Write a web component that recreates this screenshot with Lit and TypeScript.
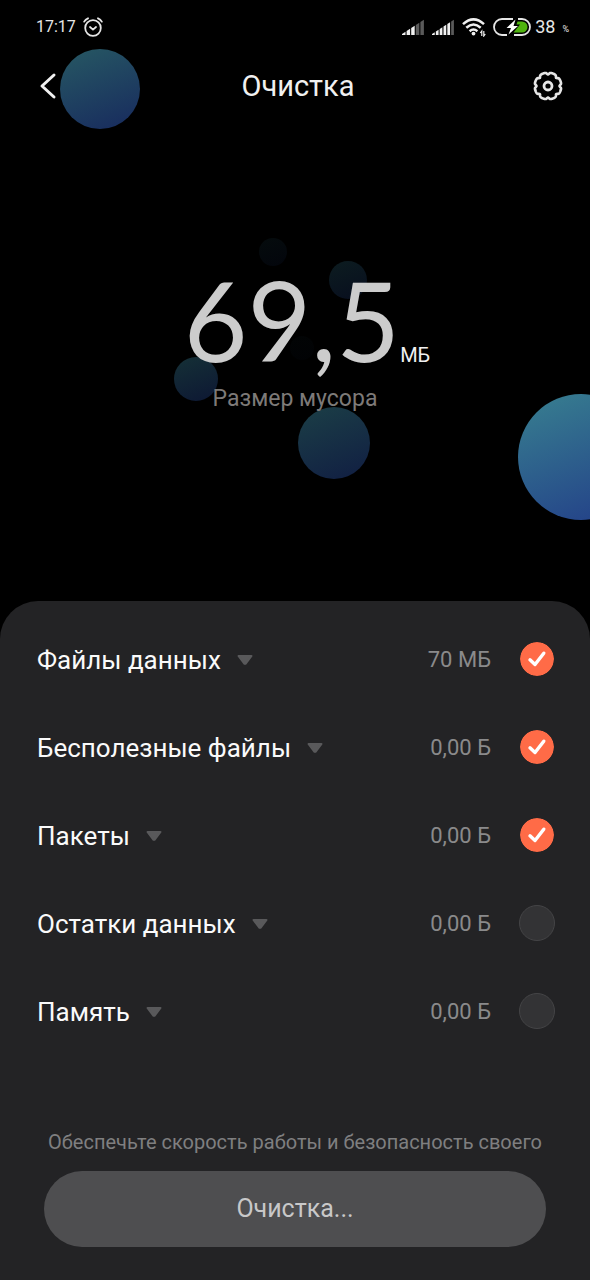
import { LitElement, html, svg, css } from "lit";
import { customElement, property, state } from "lit/decorators.js";

interface JunkItem {
  id: string;
  title: string;
  size: string;
  checked: boolean;
}

const bubbles = [
  { x: 100, y: 89, r: 40, opacity: 0.62 },
  { x: 273, y: 252, r: 14, opacity: 0.08 },
  { x: 348, y: 280, r: 19, opacity: 0.2 },
  { x: 302, y: 348, r: 12, opacity: 0.03 },
  { x: 196, y: 379, r: 22, opacity: 0.34 },
  { x: 334, y: 443, r: 36, opacity: 0.44 },
  { x: 581, y: 457, r: 63, opacity: 0.9 },
];

/* Outline of the settings gear: a circle with eight small notches. */
const gearPath = (() => {
  const points: string[] = [];
  for (let i = 0; i <= 192; i++) {
    const a = (i / 192) * Math.PI * 2;
    const wave = Math.pow(Math.abs(Math.cos(a * 4)), 9);
    const r = 13.4 - 1.9 * wave;
    points.push(`${(16 + r * Math.sin(a)).toFixed(2)} ${(16 - r * Math.cos(a)).toFixed(2)}`);
  }
  return `M${points.join("L")}Z`;
})();

@customElement("status-bar")
export class StatusBar extends LitElement {
  static styles = css`
    :host {
      display: flex;
      align-items: center;
      justify-content: space-between;
      height: 54px;
      padding: 0 21px 0 36px;
      color: #e6e6e6;
      font-size: 18px;
      line-height: 24px;
    }
    .side {
      display: flex;
      align-items: center;
    }
    .time {
      font-size: 16px;
    }
    .alarm {
      margin-left: 7px;
    }
    .signal,
    .wifi {
      margin-right: 7px;
    }
    .battery {
      margin-right: 4px;
    }
    .percent {
      margin: 4px 0 0 7px;
      font-size: 9px;
      line-height: 12px;
    }
    svg {
      display: block;
    }
  `;

  private signal(bars: number, lit: number) {
    const pitch = 23 / bars;
    const width = pitch - 1.1;
    return html`<svg class="signal" width="23" height="16" viewBox="0 0 23 16" aria-hidden="true">
      ${Array.from({ length: bars }, (_, i) => {
        const x = i * pitch;
        const top = (v: number) => 15 - (v / 23) * 15;
        return svg`<path
          d="M${x} 16V${top(x)}L${x + width} ${top(x + width)}V16z"
          fill=${i < lit ? "#f0f0f0" : "#5a5a5a"} />`;
      })}
    </svg>`;
  }

  render() {
    return html`
      <div class="side">
        <span class="time">17:17</span>
        <svg class="alarm" width="20" height="20" viewBox="0 0 20 20" fill="none" stroke="#e6e6e6" stroke-width="1.8" stroke-linecap="round" aria-hidden="true">
          <circle cx="10" cy="11" r="7.800" />
          <path d="M7 10l3 2.600L13 10M1.200 4.600Q2.500 2.300 5 1.300M18.800 4.600Q17.500 2.300 15 1.300" />
        </svg>
      </div>
      <div class="side">
        ${this.signal(5, 3)} ${this.signal(6, 5)}
        <svg class="wifi" width="24" height="20" viewBox="0 0 24 20" fill="none" stroke="#f0f0f0" stroke-width="2.500" aria-hidden="true">
          <path d="M1 7.200Q11.500-2.500 22 7.200M4.300 10.800Q11.500 4.300 18.700 10.800M7.600 14.200Q11.500 10.900 15.400 14.200" />
          <circle cx="11.500" cy="16.600" r="1.900" fill="#f0f0f0" stroke="none" />
          <path d="M19.800 19v-5l-1.500 2M21.800 14v5l1.500-2" stroke-width="1.200" />
        </svg>
        <svg class="battery" width="38" height="18" viewBox="0 0 38 18" aria-hidden="true">
          <path d="M20 1H9a8 8 0 0 0 0 16h5M21 17h8a8 8 0 0 0 0-16h-4" fill="none" stroke="#e6e6e6" stroke-width="1.800" />
          <path d="M24.500 3.500h4.500a5.500 5.500 0 0 1 0 11h-8.500l6.500-8h-3.500z" fill="#4fb30f" />
          <path d="M22.500 1.500L13.500 10h4.500l-2.500 6.500L25 8h-4.500z" fill="#fff" />
        </svg>
        <span>38</span>
        <span class="percent">%</span>
      </div>
    `;
  }
}

@customElement("junk-row")
export class JunkRow extends LitElement {
  @property({ attribute: false }) item!: JunkItem;

  static styles = css`
    :host {
      display: flex;
      align-items: center;
      height: 88px;
      padding: 0 35px 0 37px;
    }
    .name,
    .size {
      padding: 2px 0 0;
    }
    .name {
      display: flex;
      align-items: center;
      gap: 16px;
      margin: 0;
      border: 0;
      background: none;
      color: #fafafa;
      font: inherit;
      font-size: 26px;
      line-height: 32px;
      text-align: left;
      cursor: pointer;
    }
    .size {
      margin-left: auto;
      color: #8a8a8b;
      font-size: 22px;
      line-height: 28px;
    }
    .tick {
      display: grid;
      width: 36px;
      height: 36px;
      margin-left: 28px;
      cursor: pointer;
    }
    .box,
    .mark {
      grid-area: 1 / 1;
    }
    .box {
      appearance: none;
      box-sizing: border-box;
      width: 36px;
      height: 36px;
      margin: 0;
      border: 1px solid #444446;
      border-radius: 50%;
      background: #333335;
      cursor: pointer;
    }
    .box:checked {
      border-color: #232325;
      background: #ff6b47;
      background-clip: padding-box;
    }
    .mark {
      visibility: hidden;
      pointer-events: none;
    }
    .box:checked + .mark {
      visibility: visible;
    }
    svg {
      display: block;
    }
  `;

  private toggle(e: Event) {
    const checked = (e.target as HTMLInputElement).checked;
    this.dispatchEvent(new CustomEvent("toggle-item", { detail: { id: this.item.id, checked } }));
  }

  render() {
    const { title, size, checked } = this.item;
    return html`
      <button class="name" type="button" aria-expanded="false">
        <span>${title}</span>
        <svg width="16" height="10" viewBox="0 0 16 10" aria-hidden="true">
          <path d="M1.500 1h13L8.500 8.800h-1z" fill="#59595b" stroke="#59595b" stroke-width="2" stroke-linejoin="round" />
        </svg>
      </button>
      <span class="size">${size}</span>
      <label class="tick">
        <input class="box" type="checkbox" aria-label=${title} .checked=${checked} @change=${this.toggle} />
        <svg class="mark" width="36" height="36" viewBox="0 0 36 36" aria-hidden="true">
          <path d="M11 18.800l5 4.700 8.800-11.300" fill="none" stroke="#fff" stroke-width="3.400" stroke-linecap="round" stroke-linejoin="round" />
        </svg>
      </label>
    `;
  }
}

@customElement("app-root")
export class AppRoot extends LitElement {
  @state() private items: JunkItem[] = [
    { id: "data", title: "Файлы данных", size: "70 МБ", checked: true },
    { id: "useless", title: "Бесполезные файлы", size: "0,00 Б", checked: true },
    { id: "packages", title: "Пакеты", size: "0,00 Б", checked: true },
    { id: "leftovers", title: "Остатки данных", size: "0,00 Б", checked: false },
    { id: "memory", title: "Память", size: "0,00 Б", checked: false },
  ];

  static styles = css`
    :host {
      display: flex;
      flex-direction: column;
      min-height: 100vh;
      background: #000;
      font-family: Roboto, "Noto Sans", sans-serif;
    }
    .hero {
      position: relative;
      overflow: hidden;
      padding-bottom: 187px;
    }
    .bubbles {
      position: absolute;
      inset: 0;
      width: 100%;
      height: 100%;
    }
    .front {
      position: relative;
    }
    .bar {
      display: flex;
      align-items: center;
      justify-content: space-between;
      height: 64px;
      padding: 0 26px 0 32px;
    }
    .icon {
      display: block;
      width: 32px;
      height: 32px;
      margin: 0;
      padding: 0;
      border: 0;
      background: none;
      cursor: pointer;
    }
    .icon svg {
      display: block;
    }
    h1 {
      margin: 0;
      color: #f0f0f0;
      font-size: 29px;
      font-weight: 400;
      line-height: 36px;
    }
    .total {
      display: flex;
      align-items: baseline;
      justify-content: center;
      margin: 137px 0 0;
      padding-left: 24px;
    }
    .amount {
      color: #ccc;
      font-family: Lato, Roboto, sans-serif;
      font-size: 110px;
      font-weight: 400;
      line-height: 128px;
    }
    .unit {
      color: #f0f0f0;
      font-size: 20px;
      line-height: 24px;
    }
    .caption {
      margin: 0;
      color: #7d7a78;
      font-size: 23px;
      line-height: 31px;
      text-align: center;
    }
    .sheet {
      display: flex;
      flex: 1;
      flex-direction: column;
      padding-top: 14px;
      border-radius: 38px 38px 0 0;
      background: #232325;
    }
    .footer {
      display: flex;
      flex-direction: column;
      gap: 15px;
      margin-top: auto;
      padding: 0 44px 33px;
    }
    .note {
      margin: 0;
      overflow: hidden;
      color: #7f7f80;
      font-size: 20px;
      line-height: 28px;
      text-align: center;
      white-space: nowrap;
    }
    .clean {
      height: 76px;
      margin: 0;
      padding: 0;
      border: 0;
      border-radius: 38px;
      background: #4e4e50;
      color: #c8c8c9;
      font: inherit;
      font-size: 25px;
      line-height: 32px;
      cursor: pointer;
    }
  `;

  private onToggle(e: CustomEvent<{ id: string; checked: boolean }>) {
    const { id, checked } = e.detail;
    this.items = this.items.map((i) => (i.id === id ? { ...i, checked } : i));
  }

  render() {
    return html`
      <header class="hero">
        <svg class="bubbles" viewBox="0 0 590 601" preserveAspectRatio="xMidYMin slice" aria-hidden="true">
          <defs>
            <linearGradient id="bubble" x1="0.3" y1="0" x2="0.7" y2="1">
              <stop offset="0" stop-color="#3c889f" />
              <stop offset="1" stop-color="#284a98" />
            </linearGradient>
          </defs>
          ${bubbles.map(
            (b) => svg`<circle cx=${b.x} cy=${b.y} r=${b.r} fill="url(#bubble)" opacity=${b.opacity} />`
          )}
        </svg>
        <div class="front">
          <status-bar></status-bar>
          <nav class="bar">
            <button class="icon" type="button" aria-label="Назад">
              <svg width="32" height="32" viewBox="0 0 32 32" aria-hidden="true">
                <path d="M22 5L10 16l12 11" fill="none" stroke="#f0f0f0" stroke-width="3" stroke-linecap="round" stroke-linejoin="round" />
              </svg>
            </button>
            <h1>Очистка</h1>
            <button class="icon" type="button" aria-label="Настройки">
              <svg width="32" height="32" viewBox="0 0 32 32" fill="none" stroke="#e6e6e6" stroke-linejoin="round" aria-hidden="true">
                <path d=${gearPath} stroke-width="2.600" />
                <circle cx="16" cy="16" r="4" stroke-width="2.800" />
              </svg>
            </button>
          </nav>
          <p class="total"><span class="amount">69,5</span><span class="unit">МБ</span></p>
          <p class="caption">Размер мусора</p>
        </div>
      </header>
      <main class="sheet">
        <section>
          ${this.items.map((i) => html`<junk-row .item=${i} @toggle-item=${this.onToggle}></junk-row>`)}
        </section>
        <div class="footer">
          <p class="note">Обеспечьте скорость работы и безопасность своего</p>
          <button class="clean" type="button">Очистка...</button>
        </div>
      </main>
    `;
  }
}
